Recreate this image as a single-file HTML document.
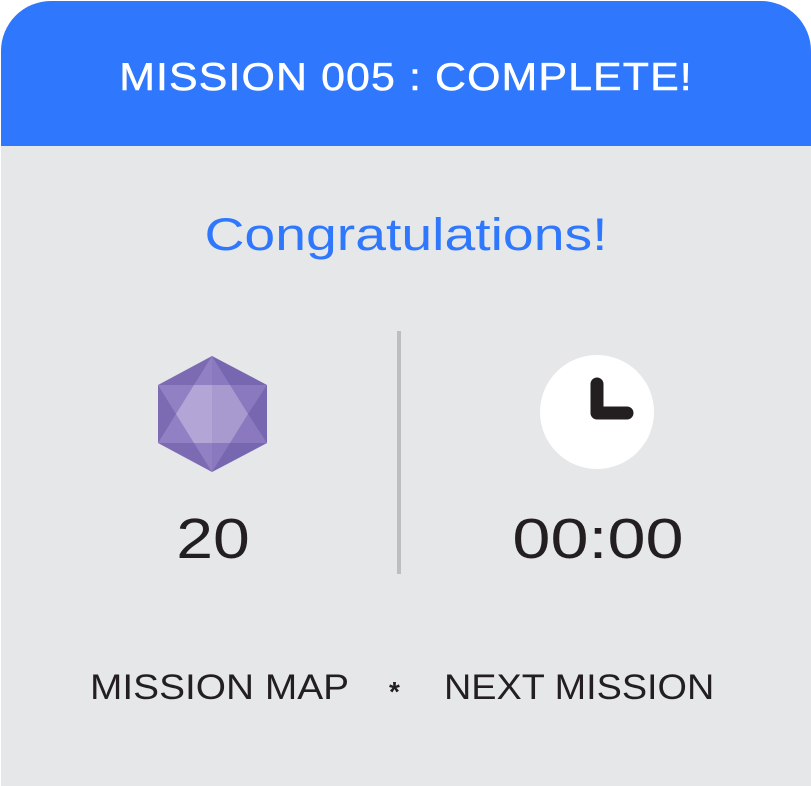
<!DOCTYPE html>
<html><head><style>
body{margin:0;width:811px;height:786px;background:#fff;overflow:hidden;font-family:"Liberation Sans",sans-serif}
.card{position:absolute;left:1px;top:1px;width:810px;height:785px;background:#e6e7e9;border-radius:50px 50px 0 0;overflow:hidden}
.t{position:absolute;white-space:nowrap;transform-origin:center top}
</style></head><body>
<div class="card">
<div style="position:absolute;left:0;top:0;width:810px;height:145px;background:#2f78fd"></div>
<div class="t" style="left:0;width:810px;text-align:center;top:55px;font-size:39px;color:#fff;letter-spacing:1px;transform:scaleX(1.1);-webkit-text-stroke:0.5px #fff">MISSION 005 : COMPLETE!</div>
<div class="t" style="left:0;width:810px;text-align:center;top:208px;font-size:45px;color:#2f78fd;transform:scaleX(1.23)">Congratulations!</div>
<div style="position:absolute;left:396px;top:330px;width:4px;height:243px;background:#bdbec0"></div>
<svg style="position:absolute;left:0;top:0" width="810" height="785">
<g transform="translate(-1,-1)">
<polygon points="212,356 267,385 267,443 212,472 158,443 158,385" fill="#7c6bb3"/>
<polygon points="212,356 230,385 267,385 248,414 267,443 230,443 212,472 194,443 158,443 176,414 158,385 194,385" fill="#9181c4"/>
<polygon points="194,385 230,385 248,414 230,443 194,443 176,414" fill="#b3a6d6"/>
<polygon points="212,356 267,385 267,443 212,472" fill="#5a3f9a" opacity="0.12"/>
<circle cx="597" cy="412" r="57" fill="#fff"/>
<path d="M597 384 V413 H627" stroke="#231f20" stroke-width="13" fill="none" stroke-linecap="round" stroke-linejoin="round"/>
</g></svg>
<div class="t" style="left:112px;width:200px;text-align:center;top:505px;font-size:57px;color:#231f20;transform:scaleX(1.16)">20</div>
<div class="t" style="left:447px;width:300px;text-align:center;top:505px;font-size:57px;color:#231f20;transform:scaleX(1.2)">00:00</div>
<div class="t" style="left:89px;top:667px;font-size:35px;color:#231f20;transform-origin:left top;transform:scaleX(1.11)">MISSION MAP</div>
<div class="t" style="left:388px;top:675px;font-size:28px;font-weight:bold;color:#231f20">*</div>
<div class="t" style="left:443px;top:667px;font-size:35px;color:#231f20;transform-origin:left top;transform:scaleX(1.08)">NEXT MISSION</div>
</div>
</body></html>
